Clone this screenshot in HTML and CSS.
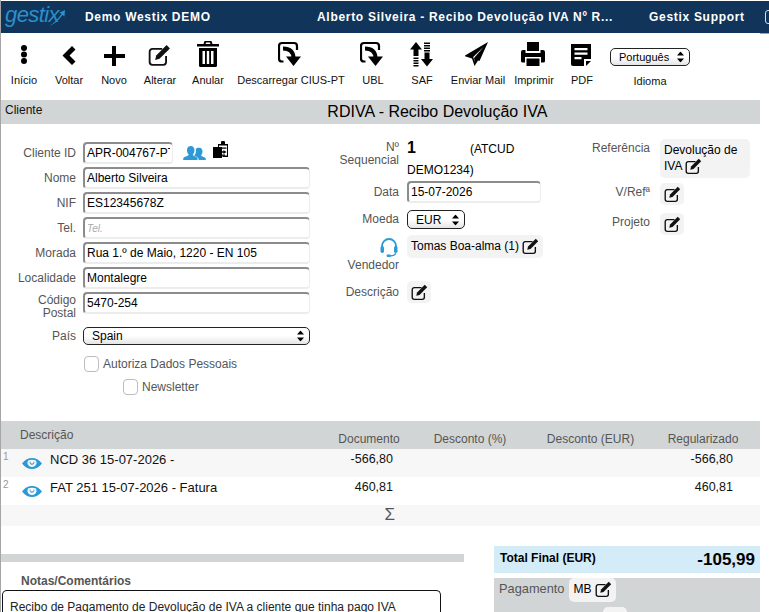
FILE: index.html
```html
<!DOCTYPE html>
<html lang="pt">
  <head>
    <meta charset="UTF-8" />
    <meta name="viewport" content="width=device-width, initial-scale=1.0" />
    <title>Recibo Devolução IVA</title>
    <link rel="stylesheet" href="styles.css">
  </head>
  <body>
    <svg class="sprite" width="0" height="0">
      <symbol id="edit" viewBox="0 0 21 21">
        <path d="M13 4.500H4a2.500 2.500 0 0 0-2.500 2.500v9.500A2.500 2.500 0 0 0 4 19h10a2.500 2.500 0 0 0 2.500-2.500V11" fill="none" stroke="#111" stroke-width="1.700"/>
        <path d="M6.500 14.500l1-4L17 1l3 3-9.500 9.500z" fill="#111"/>
      </symbol>
      <symbol id="download" viewBox="0 0 26 26">
        <path d="M5.500 20.500H4a3 3 0 0 1-3-3V5a3 3 0 0 1 3-3h12a3 3 0 0 1 3 3v4" fill="none" stroke="#000" stroke-width="2.200"/>
        <path d="M5 7.500c6 0 10 2 10.500 9" fill="none" stroke="#000" stroke-width="4"/>
        <path d="M8 15.500h15L15.500 25z"/>
      </symbol>
      <symbol id="arrows" viewBox="0 0 7 11">
        <path d="M3.500 0L7 4H0zM3.500 11L0 7h7z"/>
      </symbol>
      <symbol id="eye" viewBox="0 0 20 13">
        <path d="M0 6.500C3 2.500 6.300 1 10 1s7 1.500 10 5.500c-3 4-6.300 5.500-10 5.500S3 10.500 0 6.500zM6 3.500a4.500 4.500 0 1 0 8 0 10 10 0 0 0-8 0zM7.800 4.500a2.400 2.400 0 1 0 4.400 0l-.9.2a1.400 1.400 0 1 1-2.600 0z" fill="#2b9ad6" fill-rule="evenodd"/>
      </symbol>
    </svg>

    <div class="page">
      <header class="topbar">
        <div class="logo">
          <span>gestix</span>
          <svg width="16" height="17" viewBox="0 0 16 17"><path d="M0 16.500C5 13 9 9 12.500 4L10.500 2.500 16 0l-.5 6.500-2-1.500C10 10 5.500 14 0 16.500z" fill="#2b8fc9"/></svg>
        </div>
        <div class="topbar-company">Demo Westix DEMO</div>
        <div class="topbar-title">Alberto Silveira - Recibo Devolução IVA Nº R...</div>
        <div class="topbar-support">Gestix Support</div>
        <div class="topbar-box"></div>
      </header>
      <div class="accent"></div>

      <nav class="toolbar">
        <a class="tool">
          <svg width="26" height="26" viewBox="0 0 26 26"><circle cx="13" cy="7" r="3"/><circle cx="13" cy="13.500" r="3"/><circle cx="13" cy="20" r="3"/></svg>
          <span>Início</span>
        </a>
        <a class="tool">
          <svg width="26" height="26" viewBox="0 0 26 26"><path d="M16 5l3.500 3.500-6 6 6 6L16 24l-9.500-9.500z"/></svg>
          <span>Voltar</span>
        </a>
        <a class="tool">
          <svg width="26" height="26" viewBox="0 0 26 26"><path d="M11 5h4v8h9v4h-9v8h-4v-8H3v-4h8z"/></svg>
          <span>Novo</span>
        </a>
        <a class="tool">
          <svg width="26" height="26"><use href="#edit" x="1" y="3" width="23" height="23"/></svg>
          <span>Alterar</span>
        </a>
        <a class="tool">
          <svg width="26" height="26" viewBox="0 0 26 26"><path d="M9.500 0h7l1 3H24v2.500H2V3h6.500zM11 1.500L10.500 3h5L15 1.500zM4 7h18v17.500a1.500 1.500 0 0 1-1.500 1.500h-15A1.500 1.500 0 0 1 4 24.500zm3.500 3v13h2.500V10zm4.300 0v13h2.400V10zm4.200 0v13h2.500V10z" fill-rule="evenodd"/></svg>
          <span>Anular</span>
        </a>
        <a class="tool">
          <svg width="26" height="26"><use href="#download"/></svg>
          <span>Descarregar CIUS-PT</span>
        </a>
        <a class="tool">
          <svg width="26" height="26"><use href="#download"/></svg>
          <span>UBL</span>
        </a>
        <a class="tool">
          <svg width="26" height="26" viewBox="0 0 26 26"><path d="M7 1l6 7.500H9.500V15h-5V8.500H1zM4.500 16.500h5V18h-5zM4.500 19h5v1.500h-5zM4.500 21.500h5V23h-5zM4.500 24h5v1.500h-5zM15 1.500h6V3h-6zM15 4h6v1.500h-6zM15 6.500h6V8h-6zM15 9h6v1.500h-6zM15.500 11.500h5V18h3.500L18 25.500 12 18h3.500z"/></svg>
          <span>SAF</span>
        </a>
        <a class="tool">
          <svg width="26" height="26" viewBox="0 0 26 26"><path d="M23 1L-1 15l8 2.500L9.500 25l3.500-5.500 1.500.5zM19 5.500L9 17l1 4.500L8.200 16z" fill-rule="evenodd"/></svg>
          <span>Enviar Mail</span>
        </a>
        <a class="tool">
          <svg width="26" height="26" viewBox="0 0 26 26"><path d="M6 1h12v9H6zM0 11a2 2 0 0 1 2-2h2.500v3h15V9H22a2 2 0 0 1 2 2v9a1.500 1.500 0 0 1-1.500 1.500H20V16H4v5.500H1.500A1.500 1.500 0 0 1 0 20zM5.500 17.500h13V25h-13z"/></svg>
          <span>Imprimir</span>
        </a>
        <a class="tool">
          <svg width="26" height="26" viewBox="0 0 26 26"><path d="M2 3h20v15h-7v7H4a2 2 0 0 1-2-2zm3.500 4v2.200h13V7zm0 4.500v2.200h13v-2.200zm0 4.500v2.200h7V16z" fill-rule="evenodd"/><path d="M17 20h5l-5 5z"/></svg>
          <span>PDF</span>
        </a>
        <div class="tool">
          <div class="select-wrap select-lang">
            <select class="select"><option>Português</option></select>
            <svg class="arrows" width="7" height="11"><use href="#arrows"/></svg>
          </div>
          <span class="lang-label">Idioma</span>
        </div>
      </nav>

      <div class="section-bar">
        <span class="section-name">Cliente</span>
        <h1>RDIVA - Recibo Devolução IVA</h1>
      </div>

      <div class="form">
        <div class="col-client">
          <div class="field">
            <label>Cliente ID</label>
            <input class="input input-id" type="text" value="APR-004767-PT" />
            <svg class="users-icon" width="23" height="16" viewBox="0 0 24 17"><path d="M8 1c2.600 0 4 2 4 4.500 0 2-.8 3.500-1.800 4.500.2 1.200 1.400 1.700 3 2.300 1.200.5 2 1.200 2 2.200V16H0v-1.500c0-1 1-1.700 2.500-2.300C4.200 11.600 5.600 11 5.800 10 4.800 9 4 7.500 4 5.500 4 3 5.400 1 8 1z" fill="#2b9ad6"/><path d="M17 3c2.200 0 3.500 1.800 3.500 4 0 1.700-.6 3-1.500 3.900.2.900 1.200 1.300 2.500 1.800 1.400.5 2.500 1.100 2.500 2V16h-7.500c0-2.200-1.800-3.300-3.500-4-.6-.3-1-.5-1.300-.8.900-1.200 1.800-2.600 1.800-4.400 0-1 0-2.200-.2-2.500C13.800 3.600 15.300 3 17 3z" fill="#2b9ad6"/></svg>
            <svg class="clip-icon" width="17" height="17" viewBox="0 0 17 17"><path d="M0 6h9v11H0z"/><path d="M5 3h3V1.500a2 2 0 0 1 4 0V3h3v13H9.500v-1.500H14V4.500H6V6H5z"/><path d="M8 6.500h5.500v1.200H8zM10.500 9l3 2-3 2v-1.300H8v-1.400h2.500zM8 13.500h4v1.200H8z"/></svg>
          </div>
          <div class="field">
            <label>Nome</label>
            <input class="input" type="text" value="Alberto Silveira" />
          </div>
          <div class="field">
            <label>NIF</label>
            <input class="input" type="text" value="ES12345678Z" />
          </div>
          <div class="field">
            <label>Tel.</label>
            <input class="input" type="text" placeholder="Tel." />
          </div>
          <div class="field">
            <label>Morada</label>
            <input class="input" type="text" value="Rua 1.º de Maio, 1220 - EN 105" />
          </div>
          <div class="field">
            <label>Localidade</label>
            <input class="input" type="text" value="Montalegre" />
          </div>
          <div class="field field-tall">
            <label>Código<br />Postal</label>
            <input class="input" type="text" value="5470-254" />
          </div>
          <div class="field">
            <label>País</label>
            <div class="select-wrap select-country">
              <select class="select"><option>Spain</option></select>
              <svg class="arrows" width="7" height="11"><use href="#arrows"/></svg>
            </div>
          </div>
          <div class="check check-data"><span class="box"></span>Autoriza Dados Pessoais</div>
          <div class="check check-news"><span class="box"></span>Newsletter</div>
        </div>

        <div class="col-doc">
          <div class="doc-row doc-seq">
            <label>Nº Sequencial</label>
            <div class="seq-value"><b>1</b><span class="atcud">(ATCUD</span> DEMO1234)</div>
          </div>
          <div class="doc-row doc-date">
            <label>Data</label>
            <input class="input input-date" type="text" value="15-07-2026" />
          </div>
          <div class="doc-row doc-coin">
            <label>Moeda</label>
            <div class="select-wrap select-coin">
              <select class="select"><option>EUR</option></select>
              <svg class="arrows" width="7" height="11"><use href="#arrows"/></svg>
            </div>
          </div>
          <div class="doc-row doc-seller">
            <label>
              <svg class="headset" width="18" height="20" viewBox="0 0 18 20"><path d="M2 13V9a7 7 0 0 1 14 0v4" fill="none" stroke="#2b9ad6" stroke-width="1.800"/><rect x="0.500" y="9" width="3.500" height="7" rx="1.700" fill="#2b9ad6"/><rect x="14" y="9" width="3.500" height="7" rx="1.700" fill="#2b9ad6"/><path d="M15.500 16c0 2-2 2.800-5 2.800" fill="none" stroke="#2b9ad6" stroke-width="1.300"/><rect x="6.500" y="17.500" width="4.500" height="2.500" rx="1.200" fill="#2b9ad6"/></svg>
              Vendedor
            </label>
            <div class="chip">Tomas Boa-alma (1) <svg class="edit" width="17" height="17"><use href="#edit"/></svg></div>
          </div>
          <div class="doc-row">
            <label>Descrição</label>
            <div class="chip chip-icon"><svg class="edit" width="17" height="17"><use href="#edit"/></svg></div>
          </div>
        </div>

        <div class="col-ref">
          <div class="ref-row">
            <label>Referência</label>
            <div class="chip chip-ref">Devolução de IVA <svg class="edit" width="17" height="17"><use href="#edit"/></svg></div>
          </div>
          <div class="ref-row ref-small">
            <label>V/Refª</label>
            <div class="chip chip-icon"><svg class="edit" width="17" height="17"><use href="#edit"/></svg></div>
          </div>
          <div class="ref-row ref-small">
            <label>Projeto</label>
            <div class="chip chip-icon"><svg class="edit" width="17" height="17"><use href="#edit"/></svg></div>
          </div>
        </div>
      </div>

      <table class="lines">
        <colgroup>
          <col class="c-desc" /><col class="c-doc" /><col class="c-pct" /><col class="c-eur" /><col class="c-reg" />
        </colgroup>
        <thead>
          <tr>
            <th class="th-desc">Descrição</th>
            <th class="th-doc">Documento</th>
            <th>Desconto (%)</th>
            <th>Desconto (EUR)</th>
            <th>Regularizado</th>
          </tr>
        </thead>
        <tbody>
          <tr class="row-alt">
            <td>
              <div class="line-desc">
                <span class="line-num">1</span>
                <svg class="eye" width="20" height="13"><use href="#eye"/></svg>
                <span>NCD 36 15-07-2026 -</span>
              </div>
            </td>
            <td class="num">-566,80</td>
            <td></td>
            <td></td>
            <td class="num num-reg">-566,80</td>
          </tr>
          <tr>
            <td>
              <div class="line-desc">
                <span class="line-num">2</span>
                <svg class="eye" width="20" height="13"><use href="#eye"/></svg>
                <span>FAT 251 15-07-2026 - Fatura</span>
              </div>
            </td>
            <td class="num">460,81</td>
            <td></td>
            <td></td>
            <td class="num num-reg">460,81</td>
          </tr>
          <tr class="row-alt row-sum">
            <td></td>
            <td class="sum">Σ</td>
            <td></td>
            <td></td>
            <td></td>
          </tr>
        </tbody>
      </table>

      <div class="bottom">
        <div class="notes">
          <div class="notes-strip"></div>
          <div class="notes-title">Notas/Comentários</div>
          <div class="notes-box">Recibo de Pagamento de Devolução de IVA a cliente que tinha pago IVA</div>
        </div>
        <div class="totals">
          <div class="total-final">
            <span>Total Final (EUR)</span>
            <strong>-105,99</strong>
          </div>
          <div class="payment">
            <div class="payment-row">
              <span class="payment-label">Pagamento</span>
              <div class="chip chip-pay">MB <svg class="edit" width="17" height="17"><use href="#edit"/></svg></div>
            </div>
            <div class="chip chip-icon chip-next"></div>
          </div>
        </div>
      </div>
    </div>
  </body>
</html>
```

FILE: styles.css
```css
* {
  margin: 0;
  padding: 0;
  box-sizing: border-box;
}

html,
body {
  height: 100%;
  overflow: hidden;
  background: white;
}

body {
  font-family: "Liberation Sans", Arial, sans-serif;
  font-size: 12px;
  color: #000;
}

.sprite {
  position: absolute;
}

.page {
  width: 769px;
  height: 612px;
  overflow: hidden;
  padding-top: 1px;
  border-left: 1px solid #a5a5a5;
}

/* top bar */
.topbar {
  height: 32px;
  background: #10345a;
  color: white;
  display: flex;
  align-items: center;
  font-size: 12px;
  font-weight: bold;
  letter-spacing: 0.7px;
  white-space: nowrap;
  overflow: hidden;
  margin-left: -1px;
}

.topbar > div {
  flex-shrink: 0;
}

.logo {
  width: 85px;
  padding-left: 5px;
  display: flex;
  align-items: flex-start;
  color: #2b8fc9;
  font-size: 22px;
  font-style: italic;
  font-weight: normal;
  letter-spacing: -0.6px;
}

.logo span {
  margin-top: -4px;
}

.logo svg {
  margin: 4px 0 0 -10px;
}

.topbar-company {
  width: 232px;
}

.topbar-title {
  width: 332px;
}

.topbar-support {
  width: 116px;
}

.topbar-box {
  width: 12px;
  height: 14px;
  border: 1px solid #d8dde2;
  border-radius: 3px;
}

.accent {
  width: 9px;
  height: 1px;
  margin-left: 759px;
  background: #e8962e;
}

/* toolbar */
.toolbar {
  height: 66px;
  padding: 7px 0 0 1px;
  display: grid;
  grid-template-columns: 44px 46px 44px 48px 48px 118px 46px 52px 60px 52px 44px 92px;
}

.tool {
  display: flex;
  flex-direction: column;
  align-items: center;
  font-size: 11px;
  color: #111;
  white-space: nowrap;
}

.tool svg {
  height: 26px;
}

.tool span {
  margin-top: 7px;
}

.tool .lang-label {
  margin-top: 9px;
}

.select-wrap {
  position: relative;
}

.select {
  display: block;
  width: 100%;
  height: 100%;
  appearance: none;
  border: 1px solid #222;
  border-radius: 5px;
  background: linear-gradient(#fff, #fff 50%, #e4e4e4);
  font-family: inherit;
  font-size: 12px;
  padding-left: 8px;
  color: #000;
  outline: none;
}

.select-wrap .arrows {
  position: absolute;
  right: 6px;
  top: 50%;
  height: 11px;
  transform: translateY(-50%);
}

.select-lang {
  width: 80px;
  height: 18px;
  margin-top: 7px;
}

.select-lang .select {
  font-size: 11px;
}

/* section title */
.section-bar {
  width: 759px;
  height: 24px;
  background: #d2d5d5;
  display: flex;
  padding-left: 4px;
}

.section-name {
  padding-top: 3px;
  color: #111;
}

.section-bar h1 {
  margin-left: 285px;
  padding-top: 3px;
  font-size: 16px;
  font-weight: normal;
}

/* form */
.form {
  height: 297px;
  display: flex;
}

label {
  color: #555;
  text-align: right;
  line-height: 13px;
}

.input {
  display: block;
  width: 227px;
  height: 22px;
  border-style: solid;
  border-width: 2px 1.5px 2px 2px;
  border-color: #8c8c8c #ececec #ececec #8c8c8c;
  border-radius: 4px;
  padding: 0 2px;
  font-family: inherit;
  font-size: 12px;
  color: #000;
  outline: none;
}

.input::placeholder {
  color: #aaa;
  font-style: italic;
  font-size: 10px;
}

.col-client {
  width: 345px;
  padding-top: 18px;
}

.field {
  display: flex;
  align-items: center;
  margin-bottom: 3px;
}

.field label {
  width: 75px;
  margin-right: 7px;
  flex-shrink: 0;
}

.field-tall {
  align-items: flex-start;
  height: 32px;
}

.field-tall label {
  padding-top: 2px;
}

.input-id {
  width: 90px;
}

.users-icon {
  margin-left: 10px;
}

.clip-icon {
  margin-left: 7px;
  margin-top: -8px;
}

.select-country {
  width: 227px;
  height: 18px;
}

.check {
  display: flex;
  align-items: center;
  gap: 4px;
  height: 17px;
  color: #555;
}

.box {
  width: 15px;
  height: 16px;
  border: 1px solid #bdbdbd;
  border-radius: 4px;
}

.check-data {
  margin: 10px 0 0 83px;
}

.check-news {
  margin: 6px 0 0 122px;
}

.col-doc {
  width: 260px;
  padding-top: 13px;
}

.doc-row {
  display: flex;
  align-items: center;
  gap: 8px;
  margin-left: -12px;
}

.doc-row label {
  width: 65px;
  flex-shrink: 0;
}

.doc-seq {
  align-items: flex-start;
  height: 44px;
}

.doc-seq label {
  padding-top: 4px;
}

.seq-value {
  width: 135px;
  line-height: 21px;
}

.seq-value b {
  font-size: 16px;
}

.atcud {
  margin-left: 54px;
}

.doc-date {
  margin-bottom: 7px;
}

.input-date {
  width: 134px;
}

.doc-coin {
  margin-bottom: 6px;
}

.select-coin {
  width: 58px;
  height: 19px;
}

.doc-seller {
  align-items: flex-start;
  margin-bottom: 9px;
}

.doc-seller label {
  display: flex;
  flex-direction: column;
  align-items: flex-end;
  gap: 2px;
  padding-top: 2px;
}

.headset {
  margin-right: 1px;
}

.chip {
  display: inline-block;
  background: #f3f3f3;
  border-radius: 5px;
  padding: 3px 4px;
  line-height: 16px;
  color: #000;
}

.edit {
  vertical-align: middle;
}

.chip-icon {
  width: 24px;
  height: 22px;
}

.chip-icon .edit {
  display: block;
}

.col-ref {
  padding-top: 15px;
  margin-left: 4px;
}

.ref-row {
  display: flex;
  align-items: flex-start;
  gap: 10px;
  margin-left: -40px;
}

.ref-row label {
  width: 80px;
  padding-top: 3px;
}

.chip-ref {
  width: 90px;
  margin-bottom: 5px;
}

.ref-small {
  margin-bottom: 8px;
}

/* lines table */
.lines {
  width: 759px;
  border-collapse: collapse;
  table-layout: fixed;
}

.c-desc {
  width: 333px;
}

.c-doc {
  width: 71px;
}

.c-pct {
  width: 130px;
}

.c-eur {
  width: 111px;
}

.c-reg {
  width: 114px;
}

.lines thead tr {
  height: 28px;
  background: #d2d5d5;
}

.lines th {
  font-weight: normal;
  color: #555;
  vertical-align: bottom;
  padding-bottom: 3px;
  white-space: nowrap;
}

.lines .th-desc {
  text-align: left;
  vertical-align: top;
  padding: 7px 0 0 19px;
}

.lines .th-doc {
  padding-right: 1px;
}

.lines tbody tr {
  height: 28px;
}

.row-alt {
  background: #f7f7f7;
}

.lines .row-sum {
  height: 21px;
}

.lines td {
  color: #111;
  font-size: 13px;
  vertical-align: top;
  padding-top: 3px;
}

.line-desc {
  display: flex;
  align-items: flex-start;
  height: 25px;
}

.line-num {
  width: 21px;
  margin-top: -1px;
  padding-left: 2px;
  font-size: 10px;
  color: #999;
}

.eye {
  margin: 5px 8px 0 0;
  flex-shrink: 0;
}

.lines td.num {
  text-align: right;
  padding-right: 12px;
  font-size: 12.5px;
}

.lines td.num-reg {
  padding-right: 27px;
}

.lines td.sum {
  text-align: right;
  padding: 0 10px 0 0;
  font-size: 17px;
  color: #555;
}

/* bottom */
.bottom {
  display: flex;
  margin-top: 20px;
}

.notes {
  width: 463px;
  margin-right: 30px;
}

.notes-strip {
  height: 8px;
  margin-top: 8px;
  background: #d2d5d5;
}

.notes-title {
  margin: 13px 0 0 20px;
  font-weight: bold;
  color: #555;
  line-height: 13px;
}

.notes-box {
  width: 439px;
  height: 23px;
  margin: 2px 0 0 1px;
  padding: 10px 7px 0;
  border: 1px solid #111;
  border-bottom: none;
  border-radius: 5px 5px 0 0;
  line-height: 12px;
  color: #222;
}

.totals {
  width: 266px;
}

.total-final {
  height: 27px;
  padding: 0 5px 0 6px;
  background: #d4ebf8;
  display: flex;
  justify-content: space-between;
  align-items: center;
  font-weight: bold;
}

.total-final strong {
  font-size: 17px;
}

.total-final span {
  margin-top: -3px;
}

.payment {
  height: 60px;
  margin-top: 5px;
  background: #d2d5d5;
  padding-left: 5px;
}

.payment-row {
  display: flex;
  align-items: flex-start;
  gap: 5px;
}

.payment-label {
  padding-top: 3px;
  font-size: 12.8px;
  color: #555;
}

.chip-pay {
  width: 47px;
  height: 24px;
}

.chip-next {
  display: block;
  margin: 5px 0 0 104px;
}
```
